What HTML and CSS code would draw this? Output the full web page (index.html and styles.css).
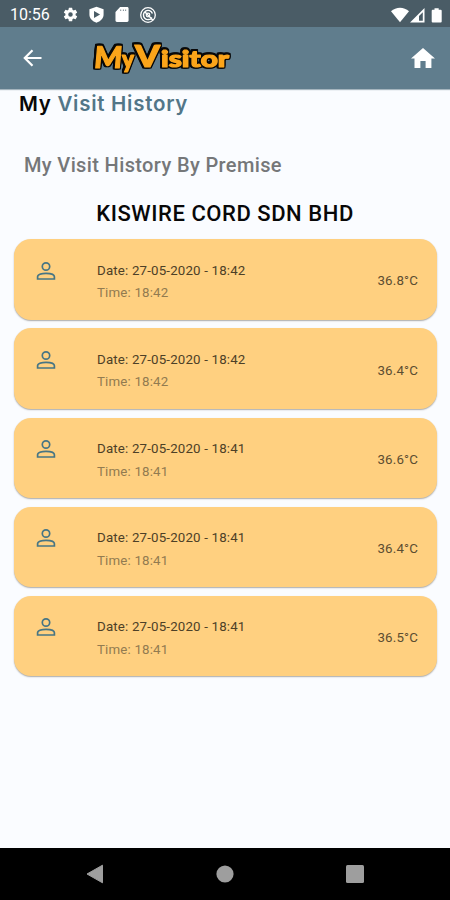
FILE: index.html
```html
<!DOCTYPE html>
<html lang="en">
<head>
<meta charset="utf-8">
<title>My Visit History</title>
<link rel="stylesheet" href="styles.css">
</head>
<body>
<svg class="defs" width="0" height="0" aria-hidden="true">
  <symbol id="person" viewBox="0 0 20 20">
    <circle cx="10" cy="5.5" r="3.700"/>
    <path d="M1.600 18V15.800C1.600 13.200 6.400 12.300 10 12.300S18.400 13.200 18.400 15.800V18Z"/>
  </symbol>
</svg>
<div class="screen">
  <header class="status">
    <span class="clock">10:56</span>
    <div class="notifications">
      <svg width="17" height="17" viewBox="0 0 24 24"><path fill="#fff" d="M19.14 12.94c.04-.3.06-.61.06-.94s-.02-.64-.07-.94l2.03-1.58a.49.49 0 0 0 .12-.61l-1.92-3.32a.49.49 0 0 0-.59-.22l-2.39.96a7 7 0 0 0-1.62-.94l-.36-2.54a.48.48 0 0 0-.48-.41h-3.84a.48.48 0 0 0-.47.41l-.36 2.54c-.59.24-1.13.57-1.62.94l-2.39-.96a.48.48 0 0 0-.59.22L2.74 8.87a.48.48 0 0 0 .12.61l2.03 1.58a6 6 0 0 0 0 1.88l-2.03 1.58a.49.49 0 0 0-.12.61l1.92 3.32c.12.22.37.29.59.22l2.39-.96c.5.38 1.03.7 1.62.94l.36 2.54c.05.24.24.41.48.41h3.84c.24 0 .44-.17.47-.41l.36-2.54a7 7 0 0 0 1.62-.94l2.39.96c.22.08.47 0 .59-.22l1.92-3.32a.48.48 0 0 0-.12-.61zM12 15.2a3.2 3.2 0 1 1 0-6.4 3.2 3.2 0 0 1 0 6.4z"/></svg>
      <svg width="17" height="17" viewBox="0 0 24 24"><path fill="#fff" fill-rule="evenodd" d="M12 1 2 4.500V12c0 5.500 4.300 9.700 10 11.500 5.700-1.800 10-6 10-11.500V4.500zM8.500 7v10l8.500-5z"/></svg>
      <svg width="17" height="17" viewBox="0 0 24 24"><path fill="#fff" fill-rule="evenodd" d="M20 1.500H10L3.500 8.500V20.500c0 1.100.9 2 2 2H20c1.100 0 2-.9 2-2V3.500c0-1.100-.9-2-2-2zM10.500 5h1v2h-1zm3.500 0h1v2h-1zM17.500 5h1v2h-1z"/></svg>
      <svg width="18" height="18" viewBox="0 0 18 18" fill="none" stroke="#fff"><circle cx="9" cy="9" r="7.300" stroke-width="1.300"/><path stroke-width="1.400" d="M12.900 11.500A4.600 4.600 0 1 1 13.400 7.500M5.500 5.500 14 14.200"/><circle cx="9" cy="9" r="1.800" stroke-width="1.200"/></svg>
    </div>
    <svg class="signals" width="54" height="16" viewBox="0 0 54 16">
      <path fill="#fff" d="M0 4.300C5-.4 13-.4 18 4.300L9 15.300Z"/>
      <path fill="#fff" fill-rule="evenodd" d="M33.500 1V15.500H19ZM31.800 5.200 28 9v4.800h3.800Z"/>
      <path fill="#fff" d="M43.500 1.200h4.200v1.600h2a1 1 0 0 1 1 1v10.700a1 1 0 0 1-1 1h-8a1 1 0 0 1-1-1V3.800a1 1 0 0 1 1-1h1.800z"/>
    </svg>
  </header>
  <nav class="appbar">
    <svg class="back" width="20" height="18" viewBox="0 0 20 18"><path d="M18.500 9H2M9.500 1.300 1.800 9l7.700 7.700" fill="none" stroke="#fff" stroke-width="2.200"/></svg>
    <svg class="logo" width="150" height="60" viewBox="0 0 150 60">
      <g class="wordmark">
        <text x="0" y="0" transform="translate(5.500 39.500) skewX(-5)" font-size="30" textLength="28" lengthAdjust="spacingAndGlyphs">M<tspan font-size="1"></tspan></text>
        <text x="34" y="40" font-size="24" textLength="12" lengthAdjust="spacingAndGlyphs">y</text>
        <text x="47" y="39" font-size="31" textLength="25" lengthAdjust="spacingAndGlyphs">V</text>
        <text x="73" y="38.500" font-size="23" textLength="68" lengthAdjust="spacingAndGlyphs">isitor</text>
      </g>
    </svg>
    <svg class="home" width="24" height="20" viewBox="0 0 24 20"><path fill="#fff" d="M9.400 20v-7h5.200v7h5.800V10.500H24L12 0 0 10.500h3.500V20z"/></svg>
  </nav>
  <main class="content">
    <h1 class="title"><span class="dark">My</span> Visit History</h1>
    <h2 class="subtitle">My Visit History By Premise</h2>
    <h3 class="premise">KISWIRE CORD SDN BHD</h3>
    <ul class="visits">
      <li class="card"><svg class="person"><use href="#person"/></svg><div class="info"><p class="date">Date: 27-05-2020 - 18:42</p><p class="time">Time: 18:42</p></div><span class="temp">36.8°C</span></li>
      <li class="card"><svg class="person"><use href="#person"/></svg><div class="info"><p class="date">Date: 27-05-2020 - 18:42</p><p class="time">Time: 18:42</p></div><span class="temp">36.4°C</span></li>
      <li class="card"><svg class="person"><use href="#person"/></svg><div class="info"><p class="date">Date: 27-05-2020 - 18:41</p><p class="time">Time: 18:41</p></div><span class="temp">36.6°C</span></li>
      <li class="card"><svg class="person"><use href="#person"/></svg><div class="info"><p class="date">Date: 27-05-2020 - 18:41</p><p class="time">Time: 18:41</p></div><span class="temp">36.4°C</span></li>
      <li class="card"><svg class="person"><use href="#person"/></svg><div class="info"><p class="date">Date: 27-05-2020 - 18:41</p><p class="time">Time: 18:41</p></div><span class="temp">36.5°C</span></li>
    </ul>
  </main>
  <footer class="navbar">
    <svg width="18" height="20" viewBox="0 0 18 20"><path fill="#9e9e9e" d="M16.500 1.200v17.600L1 10z" stroke="#9e9e9e" stroke-linejoin="round"/></svg>
    <svg width="18" height="18" viewBox="0 0 18 18"><circle cx="9" cy="9" r="8.600" fill="#9e9e9e"/></svg>
    <svg width="18" height="18" viewBox="0 0 18 18"><rect width="18" height="18" rx="1.500" fill="#9e9e9e"/></svg>
  </footer>
</div>
</body>
</html>
```
FILE: styles.css
```css
* { box-sizing: border-box; margin: 0; padding: 0; }
body { font-family: Roboto, "Liberation Sans", sans-serif; background: #fafcff; }
svg { display: block; flex: none; }
.defs { position: absolute; }
.screen { width: 450px; height: 900px; display: flex; flex-direction: column; overflow: hidden; background: #fafcff; }
.status { height: 27px; background: #4a5c66; display: flex; align-items: center; padding: 2px 5px 0 10px; color: #fff; }
.clock { width: 52px; font-size: 16px; line-height: 20px; }
.notifications { display: flex; align-items: center; gap: 8.500px; }
.signals { margin-left: auto; }
.appbar { height: 62px; background: #607d8d; display: flex; align-items: center; padding: 0 15px 0 23px; box-shadow: 0 1px 1px #a5b5be; }
.logo { margin-left: 45px; overflow: visible; }
.home { margin-left: auto; }
.wordmark { font-family: Lato, sans-serif; font-weight: 900; fill: #fba51a; stroke: #fba51a; stroke-width: 1.200; stroke-linejoin: round; filter: drop-shadow(1.500px 0 0 #080808) drop-shadow(-1.500px 0 0 #080808) drop-shadow(0 1.500px 0 #080808) drop-shadow(0 -1.500px 0 #080808); }
.content { flex: 1; }
.title { padding-left: 19px; margin-top: 2px; font: 600 20.500px/26px Inter, sans-serif; letter-spacing: 0.720px; color: #527688; white-space: nowrap; }
.dark { color: #080808; }
.subtitle { margin-top: 35px; padding-left: 24px; font-size: 20px; line-height: 26px; letter-spacing: 0.370px; font-weight: 500; color: #757779; white-space: nowrap; }
.premise { margin-top: 22px; text-align: center; font-size: 22px; line-height: 28px; letter-spacing: 0.550px; font-weight: 500; color: #080808; white-space: nowrap; }
.visits { list-style: none; display: flex; flex-direction: column; gap: 8.700px; padding: 11.200px 13px 0 14px; }
.card { height: 80.500px; border-radius: 17px; background: #ffd080; display: flex; align-items: flex-start; padding: 0 19px 0 22px; box-shadow: 0 1px 1.500px #aaa; }
.person { width: 20px; height: 20px; margin-top: 21.500px; fill: none; stroke: #477584; stroke-width: 1.700; }
.info { margin-left: 41px; padding-top: 20.500px; font-size: 13.300px; line-height: 22.500px; letter-spacing: 0.170px; white-space: nowrap; }
.date { color: #4d4027; }
.time { color: #927b50; }
.temp { margin-left: auto; margin-top: 31.300px; font-size: 13.300px; line-height: 22px; letter-spacing: 0.170px; color: #5b4d31; }
.navbar { height: 52px; background: #000; display: flex; align-items: center; justify-content: space-between; padding: 0 86px; }
```
